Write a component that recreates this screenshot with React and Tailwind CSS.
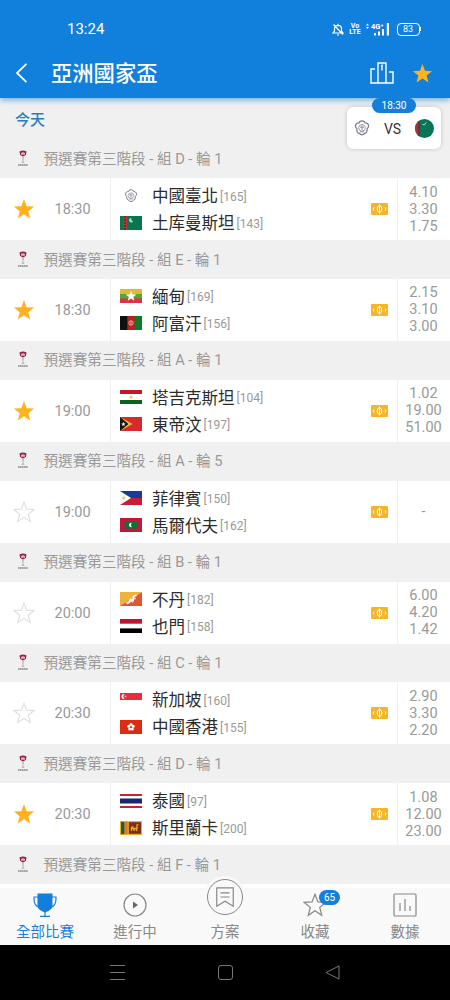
const STAR = "M12 1.2l2.9 7.7 8.1.4-6.300 5.100 2.100 7.900-6.800-4.500-6.800 4.500 2.100-7.900L1 9.300l8.100-.4z";

const flags = {
  tpe: (
    <g fill="none" stroke="#77778f" strokeWidth="1">
      <path d="M11 .8c1.600 0 2.300.6 2.500 1.700 2 0 3 1.200 3 2.600 0 1-.5 1.800-1.200 2.300.3 2.200-.6 3.700-2.100 3.900-.6.900-1.300 1.200-2.200 1.200s-1.600-.3-2.200-1.200c-1.500-.2-2.400-1.700-2.100-3.900-.7-.5-1.200-1.300-1.200-2.300 0-1.400 1-2.600 3-2.600C8.700 1.400 9.400.8 11 .8z" />
      <circle cx="11" cy="6.600" r="2.800" strokeWidth=".6" />
      <path d="M11 4.500v4M9.300 6h3.400M9.300 10h3.400" strokeWidth=".7" />
    </g>
  ),
  tkm: (
    <>
      <path fill="#08764f" d="M0 0h22v14H0z" />
      <path fill="#b23a35" d="M3 0h4v14H3z" />
      <path stroke="#5f2b2b" strokeWidth="1.6" strokeDasharray="2 1" d="M5 0v14" />
      <path d="M11.5 2a2.2 2.2 0 1 0 1.6 3.2 2.2 2.2 0 0 1-1.6-3.2z" fill="#a9dcc6" />
    </>
  ),
  mya: (
    <>
      <path fill="#e5b72c" d="M0 0h22v5H0z" />
      <path fill="#55a53d" d="M0 5h22v5H0z" />
      <path fill="#d93640" d="M0 9.5h22V14H0z" />
      <path fill="#fff" d={STAR} transform="translate(5.3 1) scale(.48)" />
    </>
  ),
  afg: (
    <>
      <path fill="#111" d="M0 0h8v14H0z" />
      <path fill="#b92121" d="M7.3 0H15v14H7.3z" />
      <path fill="#087b2d" d="M14.7 0H22v14h-7.3z" />
      <circle cx="11" cy="7" r="2.2" fill="none" stroke="#eaa6a0" />
      <path stroke="#eaa6a0" d="M11 5v4" />
    </>
  ),
  tjk: (
    <>
      <path fill="#fff" d="M0 0h22v14H0z" />
      <path fill="#c01827" d="M0 0h22v4H0z" />
      <path fill="#08651b" d="M0 10h22v4H0z" />
      <path fill="#ecc75b" d="M9.5 8.3l.2-2 1.3-.8 1.3.8.2 2z" />
    </>
  ),
  tls: (
    <>
      <path fill="#d9292c" d="M0 0h22v14H0z" />
      <path fill="#f0bd36" d="M0 0l12.5 7L0 14z" />
      <path fill="#151515" d="M0 0l8.5 7L0 14z" />
      <path fill="#fff" d={STAR} transform="translate(1 4.6) scale(.2)" />
    </>
  ),
  phi: (
    <>
      <path fill="#143c9d" d="M0 0h22v7H0z" />
      <path fill="#cb1c33" d="M0 7h22v7H0z" />
      <path fill="#fff" d="M0 0l11 7-11 7z" />
      <circle cx="3.8" cy="7" r="1.8" fill="#eed079" />
    </>
  ),
  mdv: (
    <>
      <path fill="#c3173a" d="M0 0h22v14H0z" />
      <path fill="#087336" d="M4.5 3.5h13v7h-13z" />
      <path fill="#fff" d="M12 5a2.2 2.2 0 1 0 0 4 2.4 2.4 0 0 1 0-4z" />
    </>
  ),
  bhu: (
    <>
      <path fill="#edb439" d="M0 0h22L0 14z" />
      <path fill="#df5636" d="M22 0v14H0z" />
      <path fill="none" stroke="#fff2e5" strokeWidth="2" d="M6.500 11.500l3-1.500 1-2.500 2.500 1 1-4 2.500-1.500" />
      <path stroke="#fff2e5" d="M9 8l4 2.500M12 5l4 2" />
    </>
  ),
  yem: (
    <>
      <path fill="#fff" d="M0 0h22v14H0z" />
      <path fill="#c3142e" d="M0 0h22v4.7H0z" />
      <path d="M0 9.4h22V14H0z" />
    </>
  ),
  sgp: (
    <>
      <path fill="#fff" d="M0 0h22v14H0z" />
      <path fill="#e92b3b" d="M0 0h22v7H0z" />
      <path fill="#fff" d="M4.5 1.2a2.4 2.4 0 1 0 0 4.6 2.8 2.8 0 0 1 0-4.6z" />
      <circle cx="5.6" cy="3.5" r=".9" fill="#f9bcc1" />
    </>
  ),
  hkg: (
    <>
      <path fill="#dc2b13" d="M0 0h22v14H0z" />
      <g fill="#fff">
        <circle cx="11" cy="4.6" r="1.5" />
        <circle cx="8.8" cy="6.3" r="1.5" />
        <circle cx="13.2" cy="6.3" r="1.5" />
        <circle cx="9.7" cy="9" r="1.5" />
        <circle cx="12.3" cy="9" r="1.5" />
      </g>
      <circle cx="11" cy="7" r=".8" fill="#dc2b13" />
    </>
  ),
  tha: (
    <>
      <path fill="#fff" d="M0 0h22v14H0z" />
      <path fill="#bd2538" d="M0 0h22v2H0zM0 12h22v2H0z" />
      <path fill="#17286e" d="M0 4.5h22v5H0z" />
    </>
  ),
  sri: (
    <>
      <path fill="#eeaf25" d="M0 0h22v14H0z" />
      <path fill="#17603f" d="M1 1h3.6v12H1z" />
      <path fill="#df7a23" d="M4.6 1h3v12h-3z" />
      <path fill="#812a20" d="M8.8 1.2H21v11.6H8.8z" />
      <path fill="none" stroke="#eeaf25" strokeWidth="1.3" d="M11.5 10V6.5l2-1M11.5 7.5h5V10M14 7.5V10M17 8V4l1.5-.5" />
    </>
  ),
};

const matches = [
  { group: "D", round: 1, fav: true, time: "18:30", home: ["tpe", "中國臺北", 165], away: ["tkm", "土库曼斯坦", 143], odds: ["4.10", "3.30", "1.75"] },
  { group: "E", round: 1, fav: true, time: "18:30", home: ["mya", "緬甸", 169], away: ["afg", "阿富汗", 156], odds: ["2.15", "3.10", "3.00"] },
  { group: "A", round: 1, fav: true, time: "19:00", home: ["tjk", "塔吉克斯坦", 104], away: ["tls", "東帝汶", 197], odds: ["1.02", "19.00", "51.00"] },
  { group: "A", round: 5, fav: false, time: "19:00", home: ["phi", "菲律賓", 150], away: ["mdv", "馬爾代夫", 162], odds: ["-"] },
  { group: "B", round: 1, fav: false, time: "20:00", home: ["bhu", "不丹", 182], away: ["yem", "也門", 158], odds: ["6.00", "4.20", "1.42"] },
  { group: "C", round: 1, fav: false, time: "20:30", home: ["sgp", "新加坡", 160], away: ["hkg", "中國香港", 155], odds: ["2.90", "3.30", "2.20"] },
  { group: "D", round: 1, fav: true, time: "20:30", home: ["tha", "泰國", 97], away: ["sri", "斯里蘭卡", 200], odds: ["1.08", "12.00", "23.00"] },
];

const Flag = ({ code }) => (
  <svg className="w-[22px] h-[14px] shrink-0" viewBox="0 0 22 14">
    {flags[code]}
  </svg>
);

const Star = ({ filled, className }) => (
  <svg className={className} viewBox="0 0 24 24">
    <path d={STAR} fill={filled ? "#ffb21d" : "none"} stroke={filled ? "none" : "#dedede"} strokeWidth="1.2" />
  </svg>
);

const CupLogo = () => (
  <svg className="w-3 h-[17px] shrink-0" viewBox="0 0 12 17">
    <path d="M2.5 1.5Q6-.4 9.5 1.5L9 4.5Q7 6.5 6 6.5T3 4.5z" fill="#8f2548" />
    <path d="M4 3q2-1.3 4 0v1.7H4z" fill="#e7aebb" />
    <path d="M4.8 6.500l.7 4L4.300 13h3.400l-1.200-2.500.7-4" fill="#c9bfc3" />
    <path d="M1 15h10" stroke="#8a8a8a" strokeWidth="1.600" strokeDasharray="1.6 .3" />
  </svg>
);

const GroupHeader = ({ group, round }) => (
  <div className="h-[38.85px] pl-[17px] pb-px flex items-center gap-[14.5px] text-[14.6px] text-[#999] whitespace-nowrap">
    <CupLogo />
    <span className="pt-[3px]">預選賽第三階段 - 組 {group} - 輪 {round}</span>
  </div>
);

const Team = ({ team: [code, name, rank] }) => (
  <div className="h-[27px] flex items-center">
    <Flag code={code} />
    <span className="ml-[10px] pt-[4px] text-[16.5px] text-[#2b2b2b]">{name}</span>
    <span className="ml-[2px] pt-[2px] text-[12px] text-[#999]">[{rank}]</span>
  </div>
);

const MatchRow = ({ match }) => (
  <div className="h-[62px] flex bg-white text-[14.5px] text-[#999]">
    <div className="w-[111px] border-r border-[#f0f0f0] flex items-center pl-[13px]">
      <Star filled={match.fav} className="w-[22px] h-[22px] shrink-0" />
      <span className="ml-[19.5px] pt-[2px]">{match.time}</span>
    </div>
    <div className="flex-1 pl-[9px] flex flex-col justify-center">
      <Team team={match.home} />
      <Team team={match.away} />
    </div>
    <div className="w-[26.500px] flex items-center">
      <svg className="w-[17px] h-3" viewBox="0 0 17 12">
        <rect width="17" height="12" rx="1" fill="#f5b527" />
        <g fill="none" stroke="#fff" strokeWidth="1">
          <ellipse cx="8.5" cy="6" rx="2.3" ry="3.3" />
          <path d="M8.5 1.5v9M3 4.5L2 6l1 1.5M14 4.5L15 6l-1 1.5" />
        </g>
      </svg>
    </div>
    <div className="w-[53px] border-l border-[#f0f0f0] pr-px flex flex-col items-center justify-center leading-[17px]">
      {match.odds.map((odd) => (
        <span key={odd}>{odd}</span>
      ))}
    </div>
  </div>
);

const StatusBar = () => (
  <div className="h-[48px] pl-[67px] pr-[29px] pt-[10px] flex items-center justify-between">
    <span className="text-[15px]">13:24</span>
    <div className="flex items-center">
      <svg className="w-3 h-[13px]" viewBox="0 0 12 13" fill="none" stroke="currentColor" strokeWidth="1.2">
        <path d="M1 10h10L9.500 8V5.500Q9.500 2.500 6 2.300 2.500 2.500 2.500 5.500V8zM6 .8v1.500M5 12h2M1.500 1.500l9.500 10" />
      </svg>
      <div className="ml-[7px] w-[9px] text-[7px] leading-[6.5px] font-bold flex flex-col items-center">
        <div>Vo</div>
        <div>LTE</div>
      </div>
      <svg className="ml-[6px] w-6 h-[14px]" viewBox="0 0 24 14">
        <path fill="#fff" d="M0 3.5l1.5-2 1.5 2zM0 5l1.5 2L3 5zM8 11h2v2.5H8zM12 9.5h2v4h-2zM16 7h2v6.5h-2zM20.8 1H23v12.5h-2.2z" />
        <text x="5" y="7" fontSize="7.5" fontWeight="700" fill="#fff">4G⁺</text>
      </svg>
      <div className="ml-[7px] w-[23px] h-[13px] border border-white rounded-[4px] flex items-center justify-center text-[9px] leading-none">
        83
      </div>
      <div className="w-[1.5px] h-[4px] bg-white" />
    </div>
  </div>
);

const NextMatch = () => (
  <div className="absolute right-[9px] top-[107px] w-[94px] h-[42px] px-[7px] bg-white rounded-[6px] shadow-[0_0_4px_#0003] flex items-center justify-between">
    <svg className="w-[16px] h-[16px]" viewBox="4.500 0 13 13.500">
      {flags.tpe}
    </svg>
    <span className="text-[14px] text-[#333] pt-[3px]">VS</span>
    <div className="w-[19px] h-[19px] rounded-full overflow-hidden">
      <svg className="w-full h-full" viewBox="0 0 19 19">
        <path fill="#087554" d="M0 0h19v19H0z" />
        <path fill="#a92f3d" d="M0 0h4v19H0z" />
        <path stroke="#40343a" d="M4 0v19" />
        <path fill="none" stroke="#b8e0d0" d="M7.500 5.500q2.500 1.500 3.500-2" />
      </svg>
    </div>
    <span className="absolute left-1/2 -translate-x-1/2 -top-[9px] w-[44px] h-[15px] rounded-full bg-[#147fd8] text-white text-[10px] leading-[16px] text-center">
      18:30
    </span>
  </div>
);

const tabs = [
  {
    label: "全部比賽",
    active: true,
    icon: (
      <>
        <path fill="#147fdb" stroke="none" d="M4.500.5h15v11q0 4.500-4 6.500L12 19.500 8.500 18q-4-2-4-6.500z" />
        <path d="M5 4H1q-.5 9 5.500 10.500M19 4h4q.5 9-5.500 10.500M12 18v5.500M7 23.400h10" />
      </>
    ),
  },
  {
    label: "進行中",
    icon: (
      <>
        <circle cx="12" cy="12" r="11" />
        <path fill="#666" stroke="none" d="M10 8.500l5 3.500-5 3.500z" />
      </>
    ),
  },
  { label: "方案", raised: true, icon: <path d="M3 2h18v20l-9-5.500L3 22zM7 7.500h10M7 12h10" /> },
  { label: "收藏", badge: 65, icon: <path d={STAR} /> },
  {
    label: "數據",
    icon: (
      <>
        <rect x="1" y="1" width="22" height="22" rx="1" />
        <path d="M7 10v8M12 6v12M17 13v5" />
      </>
    ),
  },
];

const TabBar = () => (
  <nav className="absolute left-0 bottom-[55px] w-full h-[61px] bg-[#f9f9f9] border-t-4 border-white flex">
    {tabs.map((tab) => (
      <div
        key={tab.label}
        className={`relative w-1/5 flex flex-col items-center ${tab.active ? "text-[#147fdb]" : "text-[#888]"}`}
      >
        {tab.raised ? (
          <div className="absolute -top-[12px] w-[42px] h-[42px] rounded-full bg-[#f9f9f9] flex items-center justify-center">
            <div className="w-[36px] h-[36px] rounded-full border border-[#888] flex items-center justify-center">
              <svg className="w-[22px] h-[22px]" viewBox="0 0 24 24" fill="none" stroke="currentColor" strokeWidth="1.3">
                {tab.icon}
              </svg>
            </div>
          </div>
        ) : (
          <svg className="absolute top-[5px] w-6 h-6" viewBox="0 0 24 24" fill="none" stroke="currentColor" strokeWidth="1.2">
            {tab.icon}
          </svg>
        )}
        {tab.badge && (
          <span className="absolute left-[49px] top-[2px] w-[21px] h-[15px] rounded-full bg-[#147fd8] text-white text-[10px] leading-[15px] text-center">
            {tab.badge}
          </span>
        )}
        <span className="mt-[35px] text-[14.5px] leading-[20px]">{tab.label}</span>
      </div>
    ))}
  </nav>
);

export default function App() {
  return (
    <div className="relative w-[450px] h-[1000px] overflow-hidden bg-[#f0f0f0] flex flex-col font-['Roboto','Noto_Sans_CJK_TC',sans-serif]">
      <header className="relative h-[98px] shrink-0 bg-[#117fdc] text-white shadow-[0_2px_6px_#117fdc99]">
        <StatusBar />
        <div className="h-[50px] pl-[15px] pr-[17px] flex items-center">
          <svg className="w-3 h-5" viewBox="0 0 12 20" fill="none" stroke="currentColor" strokeWidth="1.8">
            <path d="M11.500.8L2 10l9.500 9.200" />
          </svg>
          <h1 className="ml-[24px] pt-[2px] flex-1 text-[21.3px] font-medium">亞洲國家盃</h1>
          <svg className="w-6 h-[22px]" viewBox="0 0 24 22" fill="none" stroke="currentColor" strokeWidth="1.4">
            <path d="M8 21V1h8v20M5 7H1v14h22V10h-4M11 4.500l1-1v5" />
          </svg>
          <Star filled className="ml-[18px] w-[21px] h-[21px]" />
        </div>
      </header>

      <div className="h-[41.3px] shrink-0 px-[15px] pt-[9px] text-[15px] leading-[26px] font-medium text-[#297fbd]">今天</div>

      <main>
        {matches.map((match) => (
          <section key={match.group + match.time}>
            <GroupHeader group={match.group} round={match.round} />
            <MatchRow match={match} />
          </section>
        ))}
        <GroupHeader group="F" round={1} />
      </main>

      <NextMatch />
      <TabBar />

      <div className="absolute left-0 bottom-0 w-full h-[55px] bg-black flex items-center justify-between px-[109px]">
        <svg className="w-[17px] h-[17px]" viewBox="0 0 17 17" stroke="#777" strokeWidth="1">
          <path d="M1 1.500h15M1 8.500h15M1 15.500h15" />
        </svg>
        <div className="w-[15px] h-[15px] rounded-[3px] border border-[#777]" />
        <svg className="w-[17px] h-[17px]" viewBox="0 0 17 17" fill="none" stroke="#777">
          <path d="M15 2v13L2 8.500z" strokeLinejoin="round" />
        </svg>
      </div>
    </div>
  );
}
